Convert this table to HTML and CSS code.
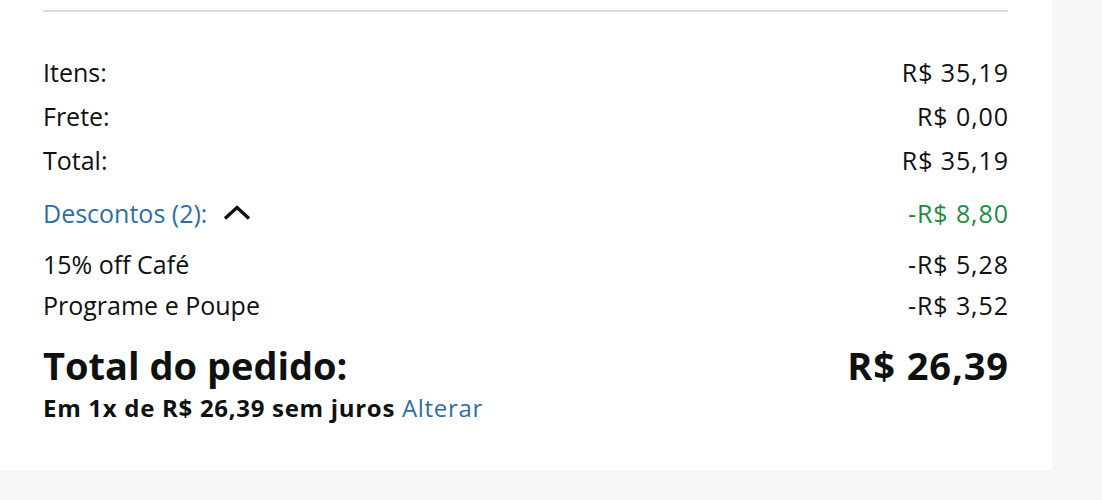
FILE: index.html
```html
<!DOCTYPE html>
<html lang="pt-BR">
<head>
<meta charset="utf-8">
<link rel="stylesheet" href="styles.css">
</head>
<body>
<div class="panel">
  <hr class="divider">
  <div class="rows">
    <div class="row"><span>Itens:</span><span class="val">R$ 35,19</span></div>
    <div class="row"><span>Frete:</span><span class="val">R$ 0,00</span></div>
    <div class="row"><span>Total:</span><span class="val">R$ 35,19</span></div>
    <div class="row discount-head">
      <span class="link">Descontos (2):<svg class="chev" width="28" height="16" viewBox="0 0 28 16"><path d="M2 14.5 L14 3.5 L26 14.5" fill="none" stroke="#111" stroke-width="3.4"/></svg></span>
      <span class="val green">-R$ 8,80</span>
    </div>
    <div class="row sub"><span>15% off Café</span><span class="val">-R$ 5,28</span></div>
    <div class="row sub2"><span>Programe e Poupe</span><span class="val">-R$ 3,52</span></div>
  </div>
  <div class="grand"><span>Total do pedido:</span><span class="val">R$ 26,39</span></div>
  <div class="install"><b>Em 1x de R$ 26,39 sem juros</b> <a class="link">Alterar</a></div>
</div>
</body>
</html>
```
FILE: styles.css
```css
html, body { margin: 0; padding: 0; }
body {
  background: #f7f7f7;
  font-family: "Open Sans", "Noto Sans", sans-serif;
  color: #0f1111;
  width: 1102px;
  height: 500px;
  overflow: hidden;
}
.panel {
  background: #fff;
  width: 1052px;
  height: 470px;
  box-sizing: border-box;
  padding: 10px 44px 0 43px;
}
.divider {
  border: 0;
  border-top: 2px solid #dcdcdc;
  margin: 0;
}
.rows { margin-top: 38px; }
.row {
  display: flex;
  justify-content: space-between;
  align-items: center;
  font-size: 25px;
  height: 44px;
  line-height: 44px;
}
.val { letter-spacing: 0.9px; margin-right: -0.9px; }
.discount-head { height: 62px; }
.sub { height: 40px; }
.sub2 { height: 42px; }
.link { color: #2f6ea5; }
.green { color: #1e8a46; }
.chev { margin-left: 16px; vertical-align: 3px; }
.grand {
  display: flex;
  justify-content: space-between;
  font-weight: 700;
  font-size: 38px;
  line-height: 48px;
  margin-top: 15px;
}
.install {
  font-size: 24px;
  line-height: 30px;
  margin-top: 4px;
  letter-spacing: 0.7px;
}
.install b { font-weight: 700; }
```
